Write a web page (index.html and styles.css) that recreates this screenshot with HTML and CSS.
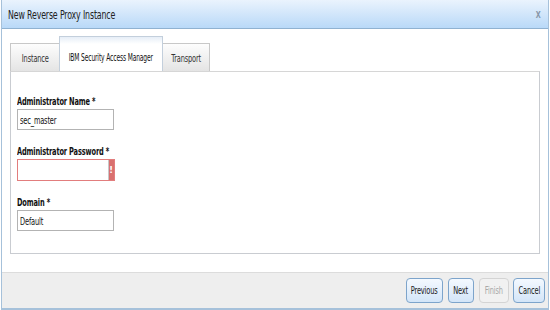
FILE: index.html
```html
<!DOCTYPE html>
<html>
<head>
<meta charset="utf-8">
<link rel="stylesheet" href="styles.css">
</head>
<body>
<div class="dialog">
  <div class="titlebar">
    <span class="title">New Reverse Proxy Instance</span>
    <span class="close">X</span>
  </div>
  <div class="body">
    <div class="tabs">
      <div class="tab tab-instance"><span class="tt">Instance</span></div>
      <div class="tab active"><span class="tt tt-active">IBM Security Access Manager</span></div>
      <div class="tab tab-transport"><span class="tt">Transport</span></div>
    </div>
    <div class="panel">
      <div class="field">
        <label class="lbl"><span class="sq">Administrator Name *</span></label>
        <div class="input"><span class="sq">sec_master</span></div>
      </div>
      <div class="field">
        <label class="lbl"><span class="sq">Administrator Password *</span></label>
        <div class="input error"><span></span><span class="flag">!</span></div>
      </div>
      <div class="field">
        <label class="lbl"><span class="sq">Domain *</span></label>
        <div class="input"><span class="sq">Default</span></div>
      </div>
    </div>
  </div>
  <div class="footer">
    <button class="btn b-prev"><span class="bt">Previous</span></button>
    <button class="btn b-next"><span class="bt">Next</span></button>
    <button class="btn b-finish disabled"><span class="bt">Finish</span></button>
    <button class="btn b-cancel"><span class="bt">Cancel</span></button>
  </div>
</div>
</body>
</html>
```
FILE: styles.css
```css
html, body { margin: 0; padding: 0; background: #fff; }
body { font-family: "DejaVu Sans Condensed", "DejaVu Sans", sans-serif; font-size: 10px; color: #1a1a1a; }
.sq { display: inline-block; white-space: nowrap; transform: scaleX(0.7); transform-origin: left center; letter-spacing: -0.2px; }
.tt, .bt { display: inline-block; white-space: nowrap; transform-origin: center center; letter-spacing: -0.2px; }
.tt { transform: scaleX(0.7); }
.tt-active { transform: scaleX(0.63); }
.bt { transform: scaleX(0.7); }
.dialog {
  width: 548px; height: 310px; margin-left: 1px; box-sizing: border-box;
  border: 1px solid #a6c1da; border-top: none; border-bottom: 2px solid #a6c1da;
  display: flex; flex-direction: column;
}
.titlebar {
  height: 29px; flex-shrink: 0; box-sizing: border-box;
  background: linear-gradient(#eaf3fd, #b9d9f8);
  border-bottom: 1px solid #90b2d1;
  display: flex; align-items: center; justify-content: space-between;
  padding: 2px 7px 0 6px;
}
.title { display: inline-block; white-space: nowrap; font-size: 11.5px; color: #222; letter-spacing: -0.2px; transform: scaleX(0.76); transform-origin: left center; }
.close { font-size: 9px; color: #8796a8; font-weight: bold; transform: scaleX(0.8); display: inline-block; }
.body { flex-shrink: 0; height: 243px; box-sizing: border-box; padding: 7px 8px 18px 8px; display: flex; flex-direction: column; }
.tabs { display: flex; align-items: flex-end; height: 35px; flex-shrink: 0; }
.tab {
  height: 28px; box-sizing: border-box;
  border: 1px solid #c8c8c8; border-bottom: none;
  background: linear-gradient(#fdfdfd, #e4e4e4);
  display: flex; align-items: center; justify-content: center;
  font-size: 10.5px; color: #333;
}
.tab-instance { width: 49px; border-right: none; }
.tab-transport { width: 47px; border-left: none; }
.tab.active {
  width: 104px; height: 35px; background: linear-gradient(#e6eef7 0, #fff 7px);
  border-color: #c3cfdc; color: #111;
  padding-top: 6px;
}
.panel {
  height: 183px; box-sizing: border-box; flex-shrink: 0;
  border: 1px solid #c9ccd1; border-top-color: #d6d6d6;
  padding: 23px 6px 0 6px;
}
.field { display: flex; flex-direction: column; margin-bottom: 15px; }
.lbl { font-weight: bold; font-size: 10.5px; color: #111; height: 13px; line-height: 13px; margin-bottom: 1px; }
.input {
  width: 97px; height: 21px; box-sizing: border-box;
  border: 1px solid #b3b3b3; display: flex; align-items: center; justify-content: space-between;
  padding-left: 2px; font-size: 10.5px; color: #111;
}
.input.error { border: 1px solid #e27d7d; height: 22px; padding-right: 0; width: 98px; }
.flag {
  width: 6px; height: 100%; background: linear-gradient(90deg, #c8c8c8 0 1px, #d9706f 1px); color: #fff; font-size: 9px; font-weight: bold;
  display: flex; align-items: center; justify-content: center;
}
.footer {
  flex: 1; box-sizing: border-box;
  background: #eeeeee; border-top: 1px solid #dcdcdc;
  display: flex; justify-content: flex-end; align-items: center; gap: 5px;
  padding: 0 3px 1px 0;
}
.btn {
  height: 25px; padding: 0; margin: 0;
  font-family: "DejaVu Sans Condensed", "DejaVu Sans", sans-serif; font-size: 10.5px;
  color: #1a1a1a; border: 1px solid #7da4cb; border-radius: 4px;
  background: linear-gradient(#f4f9ff, #d3e5f8);
  display: flex; align-items: center; justify-content: center; overflow: visible;
}
.b-prev { width: 37px; }
.b-next { width: 26px; }
.b-finish { width: 30px; }
.b-cancel { width: 32px; margin-left: -1px; }
.btn.disabled { color: #a8a8a8; border-color: #d4d4d4; background: #f1f1f1; }
```
